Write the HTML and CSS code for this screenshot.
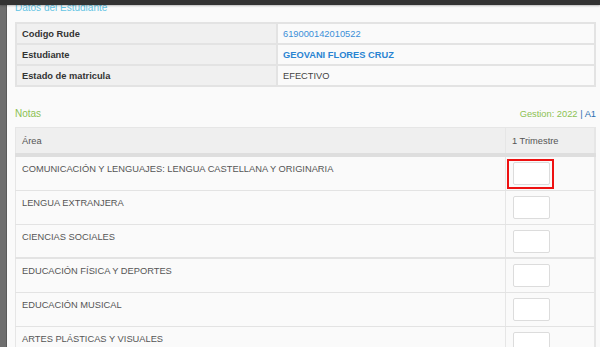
FILE: index.html
```html
<!DOCTYPE html>
<html lang="es">
<head>
<meta charset="utf-8">
<link rel="stylesheet" href="styles.css">
</head>
<body>
<div class="topbar"></div>
<div class="layout">
  <div class="side"></div>
  <div class="content">
    <h4 class="title">Datos del Estudiante</h4>
    <table class="info">
      <tr><th>Codigo Rude</th><td class="link">619000142010522</td></tr>
      <tr><th>Estudiante</th><td class="link bold">GEOVANI FLORES CRUZ</td></tr>
      <tr><th>Estado de matricula</th><td>EFECTIVO</td></tr>
    </table>
    <div class="notas-head">
      <span class="notas">Notas</span>
      <span class="gestion">Gestion: 2022 <span class="blue">| A1</span></span>
    </div>
    <table class="grades">
      <thead>
        <tr><th class="area">Área</th><th class="tri">1 Trimestre</th></tr>
      </thead>
      <tbody>
        <tr><td>COMUNICACIÓN Y LENGUAJES: LENGUA CASTELLANA Y ORIGINARIA</td><td class="cell"><span class="mark"></span><input type="text" class="grade"></td></tr>
        <tr><td>LENGUA EXTRANJERA</td><td class="cell"><input type="text" class="grade"></td></tr>
        <tr class="sep"><td>CIENCIAS SOCIALES</td><td class="cell"><input type="text" class="grade"></td></tr>
        <tr><td>EDUCACIÓN FÍSICA Y DEPORTES</td><td class="cell"><input type="text" class="grade"></td></tr>
        <tr><td>EDUCACIÓN MUSICAL</td><td class="cell"><input type="text" class="grade"></td></tr>
        <tr><td>ARTES PLÁSTICAS Y VISUALES</td><td class="cell"><input type="text" class="grade"></td></tr>
      </tbody>
    </table>
  </div>
</div>
</body>
</html>
```
FILE: styles.css
```css
html, body {
  margin: 0;
  padding: 0;
  height: 347px;
  overflow: hidden;
  background: #fafafa;
  font-family: "Liberation Sans", Arial, sans-serif;
  font-size: 9.3px;
  color: #444;
}
.topbar {
  position: relative;
  z-index: 2;
  height: 5px;
  background: #333;
  box-shadow: 0 1px 2px rgba(0,0,0,0.25);
}
.layout {
  display: flex;
  height: 342px;
}
.side {
  width: 7px;
  flex: none;
  background: #6e6e6e;
  border-right: 1px solid #5a5a5a;
  box-sizing: border-box;
}
.content {
  flex: 1;
  padding: 0 4px 0 8px;
  background: #fafafa;
}
.title {
  margin: -4px 0 0 0;
  font-size: 10px;
  font-weight: normal;
  line-height: 14px;
  height: 14px;
  color: #63c4e4;
}
table {
  border-collapse: collapse;
  width: 581px;
}
.info {
  margin-top: 7px;
  border: 2px solid #e3e3e3;
}
.info th, .info td {
  height: 19px;
  padding: 0 5px;
  border-bottom: 2px solid #e3e3e3;
  text-align: left;
  font-size: 9.3px;
}
.info th {
  width: 249px;
  background: #f0f0f0;
  color: #333;
  font-weight: bold;
  border-right: 2px solid #e3e3e3;
}
.info td {
  background: #fafafa;
  color: #444;
}
.info .link { color: #3a8fd8; }
.info .bold { font-weight: bold; color: #2a84d2; }
.notas-head {
  display: flex;
  justify-content: space-between;
  align-items: center;
  margin-top: 17px;
  height: 20px;
  line-height: 20px;
}
.notas { color: #8cc152; font-size: 10px; }
.gestion { color: #8cc152; font-size: 9.3px; }
.gestion .blue { color: #2a6fb0; }
.grades {
  margin-top: 3px;
  border: 1px solid #e6e6e6;
  border-right-width: 2px;
}
.grades thead th {
  background: #efefef;
  height: 25px;
  padding: 0 6px;
  text-align: left;
  font-weight: normal;
  color: #555;
  border-bottom: 4px solid #dedede;
}
.grades th.tri {
  width: 76px;
  border-left: 1px solid #e6e6e6;
}
.grades td {
  height: 33px;
  padding: 0 6px;
  vertical-align: top;
  border-bottom: 1px solid #e3e3e3;
  color: #555;
  line-height: 25px;
}
.grades tr.sep td {
  height: 32px;
  border-bottom-width: 2px;
}
.grades td.cell {
  position: relative;
  border-left: 1px solid #e6e6e6;
  padding: 0 5px 0 7px;
  line-height: normal;
}
.grade {
  display: block;
  width: 37px;
  height: 23px;
  box-sizing: border-box;
  border: 1px solid #dcdcdc;
  border-radius: 2px;
  background: #fff;
  margin: 5px 0 0 0;
  padding: 0;
}
.mark {
  position: absolute;
  left: 1px;
  top: 2px;
  width: 47px;
  height: 30px;
  box-sizing: border-box;
  border: 2px solid #ee1111;
}
```
